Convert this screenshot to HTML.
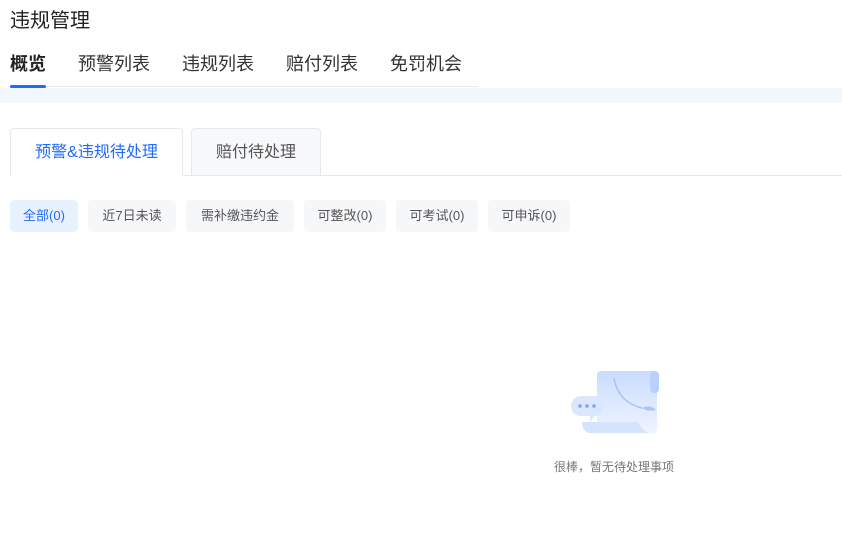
<!DOCTYPE html>
<html><head><meta charset="utf-8"><style>
*{margin:0;padding:0;box-sizing:border-box}
body{width:842px;height:541px;background:#fff;font-family:"Liberation Sans","Noto Sans CJK SC",sans-serif;position:relative;overflow:hidden;color:#333}
.a{position:absolute;white-space:nowrap}
.chip{position:absolute;top:200px;height:32px;line-height:32px;text-align:center;font-size:13px;color:#555;background:#f6f7f9;border-radius:4px}
</style></head><body>
<div class="a" style="left:10px;top:4px;font-size:20px;color:#222">违规管理</div>
<div class="a" style="left:10px;top:50px;font-size:18px;color:#222;font-weight:bold">概览</div>
<div class="a" style="left:78px;top:50px;font-size:18px;color:#333">预警列表</div>
<div class="a" style="left:182px;top:50px;font-size:18px;color:#333">违规列表</div>
<div class="a" style="left:286px;top:50px;font-size:18px;color:#333">赔付列表</div>
<div class="a" style="left:390px;top:50px;font-size:18px;color:#333">免罚机会</div>
<div class="a" style="left:10px;top:86px;width:468px;height:1px;background:#e6e8ec"></div>
<div class="a" style="left:10px;top:85px;width:36px;height:3px;background:#1f6bff;border-radius:2px"></div>
<div class="a" style="left:0;top:88px;width:842px;height:15px;background:#f2f6fd"></div>
<div class="a" style="left:183px;top:175px;width:659px;height:1px;background:#e6e8ec"></div>
<div class="a" style="left:10px;top:128px;width:173px;height:48px;border:1px solid #e6e8ec;border-bottom:none;border-radius:4px 4px 0 0;background:#fff;text-align:center;line-height:48px;font-size:16px;color:#1f6bff">预警&amp;违规待处理</div>
<div class="a" style="left:191px;top:128px;width:130px;height:47px;border:1px solid #e6e8ec;border-bottom:none;border-radius:4px 4px 0 0;background:#f7f8fa;text-align:center;line-height:47px;font-size:16px;color:#555">赔付待处理</div>
<div class="chip" style="left:10px;width:68px;background:#e8f1fe;color:#1f6bff">全部(0)</div>
<div class="chip" style="left:88px;width:88px">近7日未读</div>
<div class="chip" style="left:186px;width:108px">需补缴违约金</div>
<div class="chip" style="left:304px;width:82px">可整改(0)</div>
<div class="chip" style="left:396px;width:82px">可考试(0)</div>
<div class="chip" style="left:488px;width:82px">可申诉(0)</div>
<svg class="a" style="left:568px;top:368px" width="94" height="68" viewBox="0 0 94 68">
<defs><linearGradient id="g" x1="0" y1="0" x2="0" y2="1"><stop offset="0" stop-color="#c9dcfd"/><stop offset="1" stop-color="#eef4ff"/></linearGradient></defs>
<rect x="29" y="3" width="60" height="62" rx="4" fill="url(#g)"/>
<rect x="82" y="3" width="9" height="22" rx="4" fill="#b8d0fb"/>
<path d="M46 10 Q50 34 74 40" stroke="#a8c4f8" stroke-width="1.5" fill="none"/>
<path d="M74 40 Q82 36 88 42 Q80 44 74 40Z" fill="#a8c4f8"/>
<path d="M14 54 H70 Q74 62 80 65 H20 Q14 62 14 54Z" fill="#d5e3fd"/>
<rect x="3" y="28" width="33" height="20" rx="10" fill="#dbe7fe"/>
<path d="M22 46 L22 54 L28 46Z" fill="#dbe7fe"/>
<circle cx="12" cy="38" r="1.8" fill="#7aa3f5"/><circle cx="19" cy="38" r="1.8" fill="#7aa3f5"/><circle cx="26" cy="38" r="1.8" fill="#7aa3f5"/>
</svg>
<div class="a" style="left:554px;top:458px;font-size:12px;color:#777">很棒，暂无待处理事项</div>
</body></html>
